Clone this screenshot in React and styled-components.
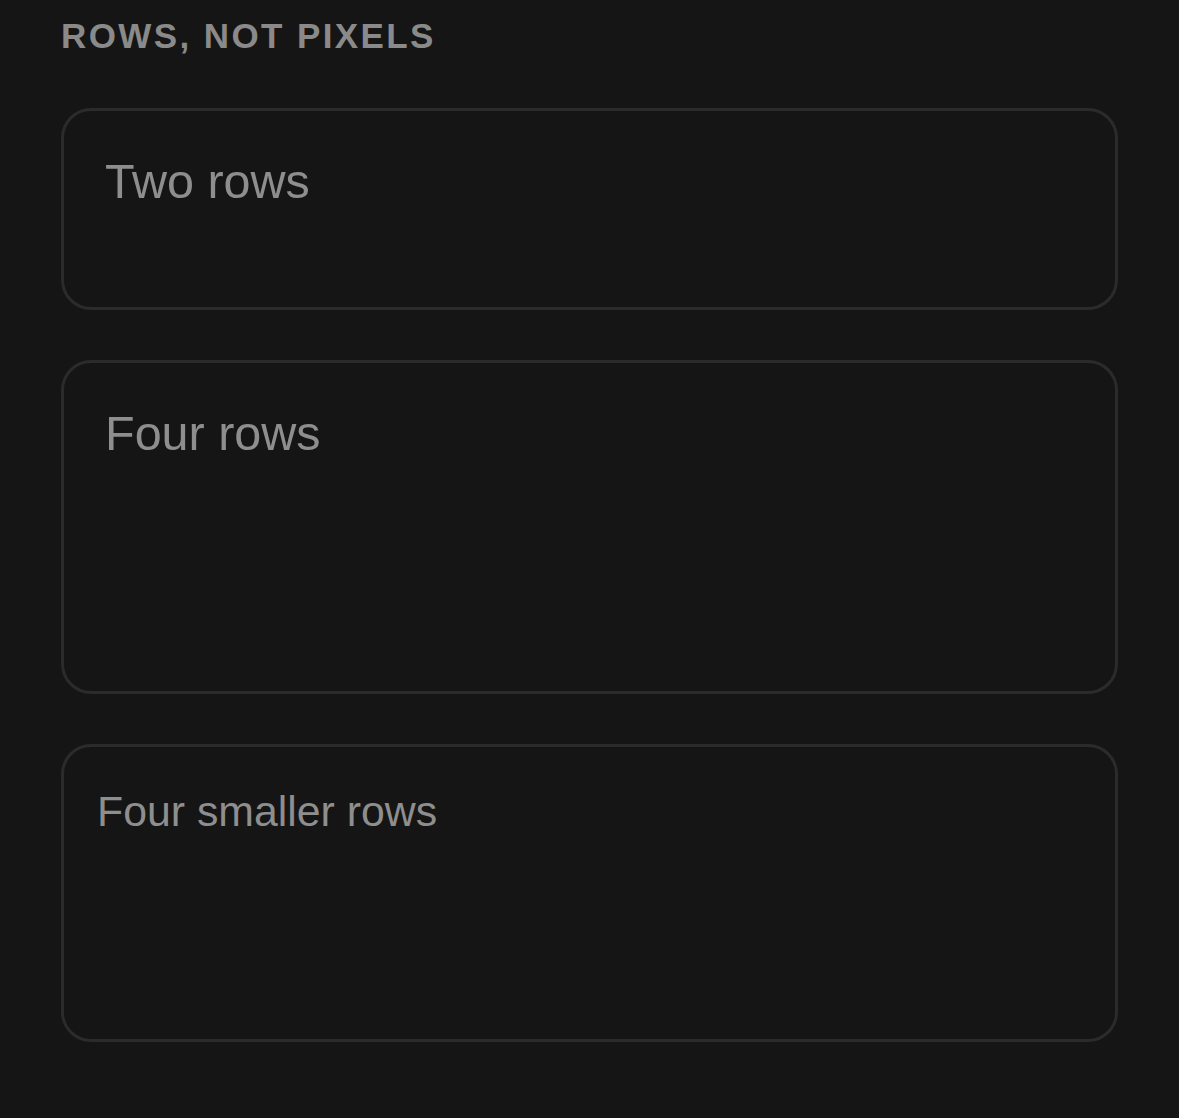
import React from 'react'
import styled, { createGlobalStyle } from 'styled-components'

const GlobalStyle = createGlobalStyle`
  html, body {
    margin: 0;
    background: #151515;
  }
  body {
    font-family: "Liberation Sans", Arial, sans-serif;
  }
`

const Page = styled.main`
  min-height: 1118px;
  box-sizing: border-box;
  padding: 15px 61px 0 61px;
  display: flex;
  flex-direction: column;
  gap: 50px;
`

const Heading = styled.h2`
  margin: 0 0 1px;
  font-size: 35px;
  line-height: 42px;
  font-weight: 700;
  letter-spacing: 2.4px;
  color: #8a8a8a;
  text-transform: uppercase;
`

const Field = styled.textarea`
  display: block;
  width: 100%;
  box-sizing: border-box;
  margin: 0;
  resize: none;
  overflow: hidden;
  background: #151515;
  border: 3px solid #2b2b2b;
  border-radius: 30px;
  color: #8e8e8e;
  font-family: "Liberation Sans", Arial, sans-serif;
  font-size: ${(p) => (p.$small ? '42.8px' : '48.5px')};
  line-height: ${(p) => (p.$small ? '55px' : '66px')};
  padding: ${(p) => (p.$small ? '37px 33px 35px' : '37px 41px 26px')};
  height: ${(p) => p.$height}px;
  outline: none;

  &::placeholder {
    color: #8e8e8e;
    opacity: 1;
  }
`

const App = () => {
  return (
    <>
      <GlobalStyle />
      <Page>
        <Heading>Rows, not pixels</Heading>
        <Field rows={2} $height={202} placeholder="Two rows" />
        <Field rows={4} $height={334} placeholder="Four rows" />
        <Field rows={4} $height={298} $small placeholder="Four smaller rows" />
      </Page>
    </>
  )
}

export default App
